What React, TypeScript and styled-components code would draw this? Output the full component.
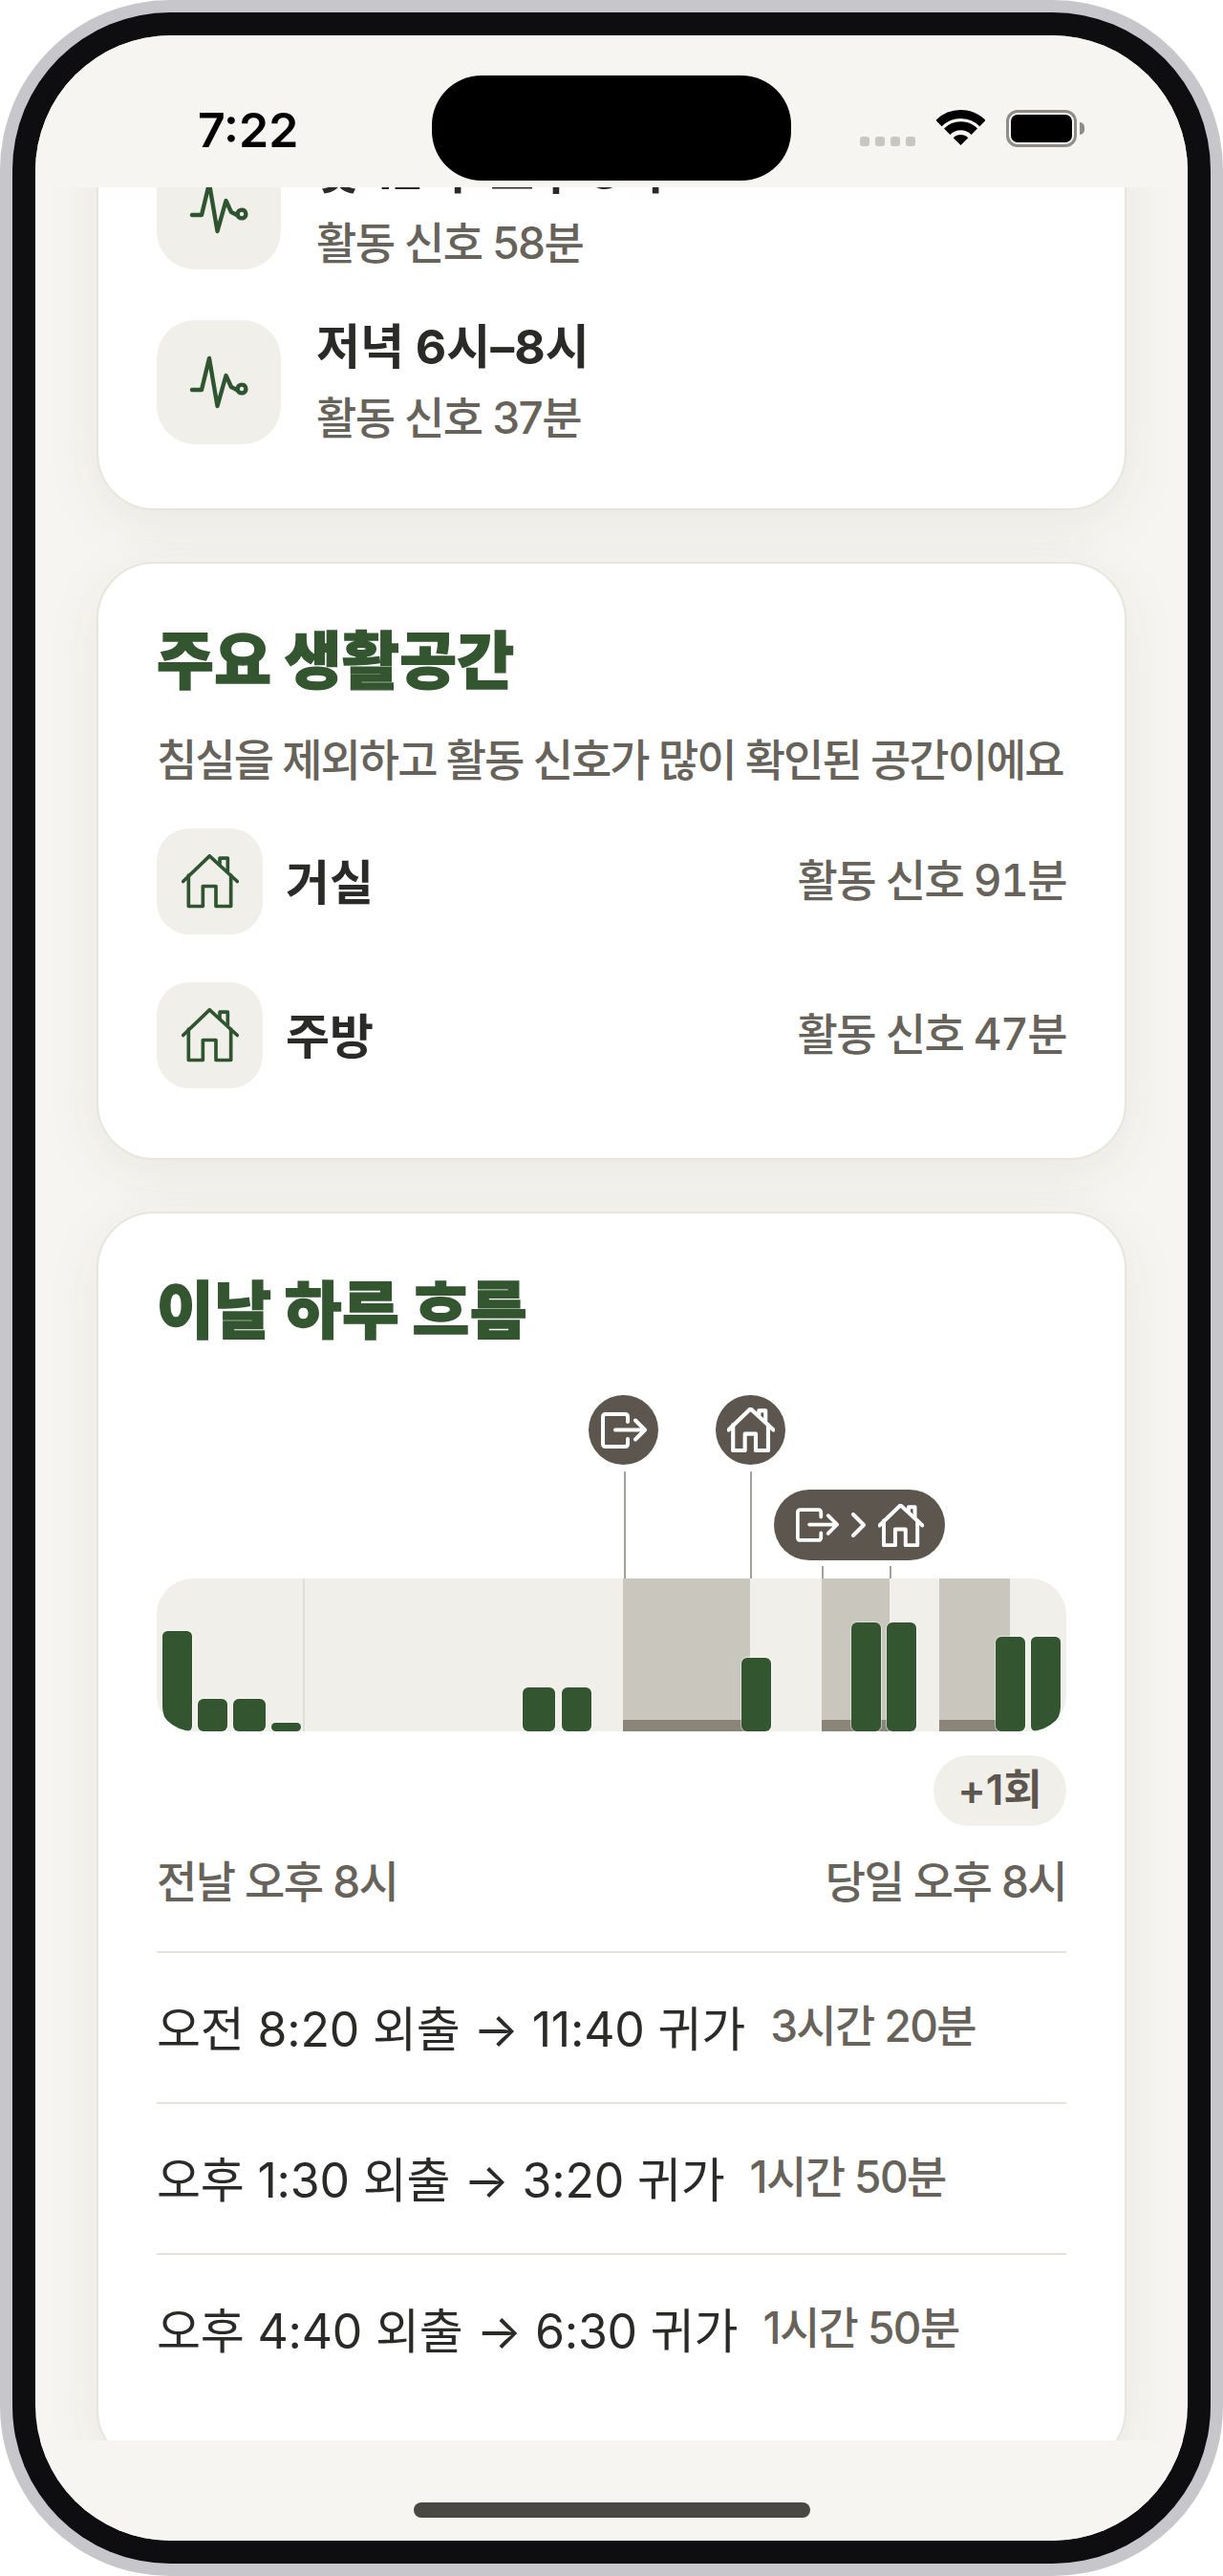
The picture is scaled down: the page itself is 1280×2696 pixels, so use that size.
import { createGlobalStyle, styled } from "styled-components";

const GlobalStyle = createGlobalStyle`
  html, body {
    margin: 0;
    padding: 0;
    background: #fff;
  }
  * {
    box-sizing: border-box;
  }
`;

const FONT = `Inter, "Noto Sans CJK KR", sans-serif`;

const Phone = styled.div`
  width: 1280px;
  height: 2696px;
  padding: 13px;
  border-radius: 178px;
  background: #c7c7cb;
  font-family: ${FONT};
`;

const Bezel = styled.div`
  height: 100%;
  padding: 24px;
  border-radius: 165px;
  background: #0e0e10;
`;

const Screen = styled.div`
  position: relative;
  display: flex;
  flex-direction: column;
  height: 100%;
  border-radius: 142px;
  background: #f6f5f1;
  overflow: hidden;
`;

const StatusBar = styled.div`
  position: relative;
  z-index: 2;
  flex: none;
  display: flex;
  align-items: flex-start;
  justify-content: space-between;
  height: 159px;
  padding: 72px 116px 0 170px;
  background: #f6f5f1;
`;

const Time = styled.div`
  font-size: 50px;
  font-weight: 600;
  line-height: 54px;
  color: #000;
`;

const Island = styled.div`
  position: absolute;
  top: 42px;
  left: 415px;
  width: 376px;
  height: 110px;
  border-radius: 52px;
  background: #000;
`;

const StatusIcons = styled.div`
  display: flex;
  align-items: flex-start;
  margin-top: 6px;
`;

const Signal = styled.div`
  display: flex;
  gap: 6px;
  margin: 28px 22px 0 0;
`;

const SignalDot = styled.span`
  width: 10px;
  height: 10px;
  border-radius: 3px;
  background: #c8c6c0;
`;

const Battery = styled.div`
  position: relative;
  width: 74px;
  height: 39px;
  margin: 0 0 0 22px;
  padding: 2px;
  border: 3px solid #8f8d88;
  border-radius: 12px;

  &::before {
    content: "";
    display: block;
    height: 100%;
    border-radius: 7px;
    background: #000;
  }

  &::after {
    content: "";
    position: absolute;
    top: 10px;
    right: -11px;
    width: 5px;
    height: 13px;
    border-radius: 0 6px 6px 0;
    background: #8f8d88;
  }
`;

const Viewport = styled.div`
  flex: 1;
  min-height: 0;
  overflow: hidden;
`;

const Feed = styled.div`
  display: flex;
  flex-direction: column;
  gap: 54px;
  margin-top: -111px;
  padding: 0 64px;
`;

const Card = styled.section<{ $pad: string }>`
  padding: ${p => p.$pad};
  border: 2px solid #e7e5de;
  border-radius: 60px;
  background: #fff;
  box-shadow: 0 14px 60px rgba(70, 62, 40, 0.07);
`;

const SlotList = styled.div`
  display: flex;
  flex-direction: column;
  gap: 53px;
`;

const SlotRow = styled.div`
  display: flex;
  gap: 37px;
`;

const IconBox = styled.div<{ $size: number }>`
  flex: none;
  display: flex;
  align-items: center;
  justify-content: center;
  width: ${p => p.$size}px;
  height: ${p => p.$size}px;
  border-radius: ${p => Math.round(p.$size * 0.31)}px;
  background: #f1efe9;
  color: #2f5530;
`;

const SlotText = styled.div`
  display: flex;
  flex-direction: column;
  gap: 18px;
`;

const SlotTitle = styled.div`
  font-size: 50px;
  font-weight: 700;
  line-height: 56px;
  color: #2a2a28;
`;

const MutedText = styled.div`
  font-size: 46px;
  font-weight: 500;
  line-height: 56px;
  letter-spacing: -1.6px;
  color: #67635b;
`;

const CardTitle = styled.h2`
  margin: 0;
  font-size: 65px;
  font-weight: 900;
  line-height: 74px;
  letter-spacing: 0.4px;
  color: #33552f;
  -webkit-text-stroke: 1.4px #33552f;
`;

const CardNote = styled(MutedText)`
  margin-top: 36px;
  line-height: 60px;
  letter-spacing: -2px;
  white-space: nowrap;
`;

const PlaceList = styled.div`
  display: flex;
  flex-direction: column;
  gap: 50px;
  margin-top: 42px;
`;

const PlaceRow = styled.div`
  display: flex;
  align-items: center;
`;

const PlaceName = styled.div`
  flex: 1;
  margin-left: 24px;
  padding-bottom: 6px;
  font-size: 50px;
  font-weight: 700;
  color: #2a2a28;
`;

const PlaceSignal = styled(MutedText)`
  padding-bottom: 3px;
  font-variant-numeric: tabular-nums;
`;

const MarkerLayer = styled.div`
  position: relative;
  height: 192px;
  margin-top: 51px;
`;

const Pin = styled.div<{ $x: number }>`
  position: absolute;
  top: 0;
  left: ${p => p.$x}px;
  display: flex;
  align-items: center;
  justify-content: center;
  width: 73px;
  height: 73px;
  border-radius: 50%;
  background: #5c564e;
  color: #fff;
`;

const Stem = styled.div<{ $x: number; $top: number }>`
  position: absolute;
  top: ${p => p.$top}px;
  bottom: 0;
  left: ${p => p.$x}px;
  width: 2px;
  background: #a3a19b;
`;

const TripBadge = styled.div`
  position: absolute;
  top: 99px;
  left: 646px;
  display: flex;
  align-items: center;
  justify-content: center;
  gap: 13px;
  width: 179px;
  height: 74px;
  border-radius: 37px;
  background: #5c564e;
  color: #fff;
`;

const Track = styled.div`
  position: relative;
  height: 160px;
  border-radius: 38px;
  background: #f1efe9;
  overflow: hidden;
`;

const Midnight = styled.div`
  position: absolute;
  top: 0;
  bottom: 0;
  left: 153px;
  width: 2px;
  background: #e0ded8;
`;

const AwayBand = styled.div<{ $x: number; $w: number }>`
  position: absolute;
  top: 0;
  bottom: 0;
  left: ${p => p.$x}px;
  width: ${p => p.$w}px;
  background: #c9c6bd;

  &::after {
    content: "";
    position: absolute;
    right: 0;
    bottom: 0;
    left: 0;
    height: 12px;
    background: #8a8578;
  }
`;

const Bar = styled.div<{ $x: number; $w: number; $h: number; $corner?: "left" | "right" }>`
  position: absolute;
  bottom: 0;
  left: ${p => p.$x}px;
  width: ${p => p.$w}px;
  height: ${p => p.$h}px;
  border-radius: 6px 6px ${p => (p.$corner === "right" ? "28px" : "6px")} ${p => (p.$corner === "left" ? "28px" : "6px")};
  background: #33552f;
  box-shadow: 0 0 0 1px rgba(255, 255, 255, 0.45);
`;

const MoreRow = styled.div`
  display: flex;
  justify-content: flex-end;
  margin-top: 25px;
`;

const MoreChip = styled.div`
  width: 139px;
  height: 74px;
  border-radius: 37px;
  background: #f1efe9;
  font-size: 44px;
  font-weight: 600;
  line-height: 72px;
  text-align: center;
  color: #5c564e;
`;

const RangeLabels = styled(MutedText)`
  display: flex;
  justify-content: space-between;
  margin-top: 28px;
  line-height: 60px;
`;

const TripList = styled.div`
  margin-top: 43px;
`;

const TripRow = styled.div`
  display: flex;
  align-items: center;
  gap: 26px;
  height: 158px;
  padding-bottom: 4px;
  border-top: 2px solid #e4e2db;
  font-size: 50px;
  font-weight: 400;
  letter-spacing: -0.2px;
  color: #2a2a28;
  white-space: nowrap;
`;

const BottomBar = styled.div`
  position: relative;
  z-index: 2;
  flex: none;
  display: flex;
  justify-content: center;
  height: 105px;
  padding-top: 65px;
  background: #f6f5f1;
`;

const HomeIndicator = styled.div`
  width: 415px;
  height: 16px;
  border-radius: 8px;
  background: #4a4843;
`;

function WifiIcon() {
  return (
    <svg width="51" height="37" viewBox="0 0 51 37" fill="none">
      <path d="M2.52 14.02A32.5 32.5 0 0 1 48.48 14.02" stroke="#000" strokeWidth="9" />
      <path d="M11.22 22.72A20.2 20.2 0 0 1 39.78 22.72" stroke="#000" strokeWidth="9" />
      <path d="M25.5 37L17.7 29.2A11 11 0 0 1 33.3 29.2Z" fill="#000" />
    </svg>
  );
}

function PulseIcon() {
  return (
    <svg width="64" height="64" viewBox="0 0 64 64" fill="none" stroke="currentColor" strokeWidth="4.4" strokeLinejoin="round" strokeLinecap="round">
      <path d="M4 40H14L22 7L30.5 57L39.5 25L45 37L51 40" />
      <circle cx="56" cy="39" r="4.4" />
    </svg>
  );
}

function HomeIcon({ width, height, stroke }: { width: number; height: number; stroke: number }) {
  return (
    <svg width={width} height={height} viewBox="0 0 180 170" fill="none" stroke="currentColor" strokeWidth={stroke} strokeLinejoin="round" strokeLinecap="round">
      <path d="M5 85L88 5L175 85" />
      <path d="M120 30V12H145V52" />
      <path d="M22 66V163H67V100H108V163H155V66" />
    </svg>
  );
}

function ExitIcon({ width, height }: { width: number; height: number }) {
  return (
    <svg width={width} height={height} viewBox="0 0 48 38" fill="none" stroke="currentColor" strokeWidth="4" strokeLinejoin="round" strokeLinecap="round">
      <path d="M28 10V5Q28 2 25 2H5Q2 2 2 5V33Q2 36 5 36H25Q28 36 28 33V28" />
      <path d="M15 18.5H46M36 8.5L46 18.5L36 28.5" />
    </svg>
  );
}

function ChevronIcon() {
  return (
    <svg width="15" height="26" viewBox="0 0 15 26" fill="none" stroke="currentColor" strokeWidth="4" strokeLinejoin="round" strokeLinecap="round">
      <path d="M2 2L13 13L2 24" />
    </svg>
  );
}

const BARS: { x: number; w: number; h: number; corner?: "left" | "right" }[] = [
  { x: 6, w: 31, h: 105, corner: "left" },
  { x: 43, w: 31, h: 34 },
  { x: 80, w: 34, h: 34 },
  { x: 120, w: 31, h: 9 },
  { x: 383, w: 34, h: 46 },
  { x: 424, w: 31, h: 46 },
  { x: 612, w: 31, h: 77 },
  { x: 727, w: 31, h: 114 },
  { x: 764, w: 31, h: 114 },
  { x: 878, w: 31, h: 99 },
  { x: 915, w: 31, h: 99, corner: "right" },
];

const BANDS = [
  { x: 488, w: 133 },
  { x: 696, w: 71 },
  { x: 819, w: 74 },
];

const SLOTS = [
  { time: "낮 12시–오후 3시", signal: "활동 신호 58분" },
  { time: "저녁 6시–8시", signal: "활동 신호 37분" },
];

const PLACES = [
  { name: "거실", signal: "활동 신호 91분" },
  { name: "주방", signal: "활동 신호 47분" },
];

const TRIPS = [
  { text: "오전 8:20 외출 → 11:40 귀가", length: "3시간 20분" },
  { text: "오후 1:30 외출 → 3:20 귀가", length: "1시간 50분" },
  { text: "오후 4:40 외출 → 6:30 귀가", length: "1시간 50분" },
];

function App() {
  return (
    <Phone>
      <GlobalStyle />
      <Bezel>
        <Screen>
          <StatusBar>
            <Time>7:22</Time>
            <Island />
            <StatusIcons>
              <Signal>
                <SignalDot />
                <SignalDot />
                <SignalDot />
                <SignalDot />
              </Signal>
              <WifiIcon />
              <Battery />
            </StatusIcons>
          </StatusBar>
          <Viewport>
            <Feed>
              <Card $pad="65px 61px 67px">
                <SlotList>
                  {SLOTS.map(slot => (
                    <SlotRow key={slot.time}>
                      <IconBox $size={130}>
                        <PulseIcon />
                      </IconBox>
                      <SlotText>
                        <SlotTitle>{slot.time}</SlotTitle>
                        <MutedText>{slot.signal}</MutedText>
                      </SlotText>
                    </SlotRow>
                  ))}
                </SlotList>
              </Card>
              <Card $pad="65px 61px 73px">
                <CardTitle>주요 생활공간</CardTitle>
                <CardNote>침실을 제외하고 활동 신호가 많이 확인된 공간이에요</CardNote>
                <PlaceList>
                  {PLACES.map(place => (
                    <PlaceRow key={place.name}>
                      <IconBox $size={111}>
                        <HomeIcon width={60} height={57} stroke={11} />
                      </IconBox>
                      <PlaceName>{place.name}</PlaceName>
                      <PlaceSignal>{place.signal}</PlaceSignal>
                    </PlaceRow>
                  ))}
                </PlaceList>
              </Card>
              <Card $pad="65px 61px 64px">
                <CardTitle>이날 하루 흐름</CardTitle>
                <MarkerLayer>
                  <Pin $x={452}>
                    <ExitIcon width={48} height={38} />
                  </Pin>
                  <Stem $x={489} $top={80} />
                  <Pin $x={585}>
                    <HomeIcon width={50} height={47} stroke={15} />
                  </Pin>
                  <Stem $x={621} $top={80} />
                  <TripBadge>
                    <ExitIcon width={45} height={36} />
                    <ChevronIcon />
                    <HomeIcon width={48} height={45} stroke={15} />
                  </TripBadge>
                  <Stem $x={696} $top={179} />
                  <Stem $x={767} $top={179} />
                </MarkerLayer>
                <Track>
                  <Midnight />
                  {BANDS.map(band => (
                    <AwayBand key={band.x} $x={band.x} $w={band.w} />
                  ))}
                  {BARS.map(bar => (
                    <Bar key={bar.x} $x={bar.x} $w={bar.w} $h={bar.h} $corner={bar.corner} />
                  ))}
                </Track>
                <MoreRow>
                  <MoreChip>+1회</MoreChip>
                </MoreRow>
                <RangeLabels>
                  <span>전날 오후 8시</span>
                  <span>당일 오후 8시</span>
                </RangeLabels>
                <TripList>
                  {TRIPS.map(trip => (
                    <TripRow key={trip.text}>
                      <span>{trip.text}</span>
                      <MutedText as="span">{trip.length}</MutedText>
                    </TripRow>
                  ))}
                </TripList>
              </Card>
            </Feed>
          </Viewport>
          <BottomBar>
            <HomeIndicator />
          </BottomBar>
        </Screen>
      </Bezel>
    </Phone>
  );
}

export default App;
